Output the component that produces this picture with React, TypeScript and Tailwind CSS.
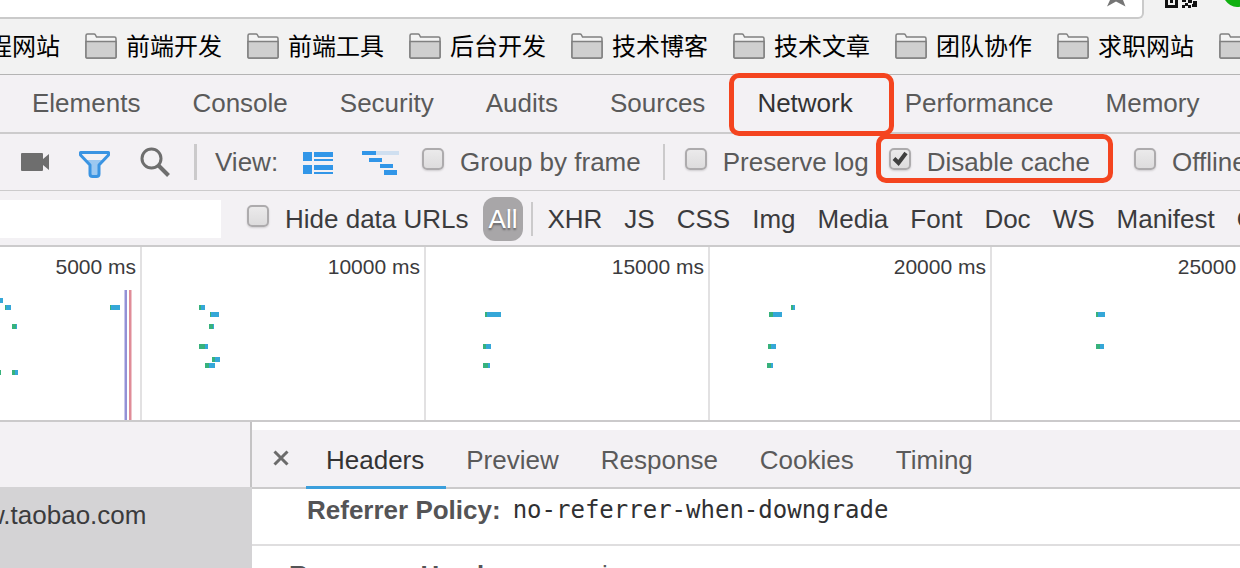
import { useState } from "react";

const bookmarks = ["前端开发", "前端工具", "后台开发", "技术博客", "技术文章", "团队协作", "求职网站"];

const panels = ["Elements", "Console", "Security", "Audits", "Sources", "Network", "Performance", "Memory"];

const resourceTypes = ["XHR", "JS", "CSS", "Img", "Media", "Font", "Doc", "WS", "Manifest", "Other"];

const timeMarks = ["5000 ms", "10000 ms", "15000 ms", "20000 ms", "25000 ms"];

const detailTabs = ["Headers", "Preview", "Response", "Cookies", "Timing"];

const GREEN = "#37b27c";
const BLUE = "#35a7d8";

// x, y, total width, width of the green (waiting) part
const requests = [
  [-3, 51, 6, 0],
  [5, 58, 6, 1],
  [12, 77, 5, 4],
  [0, 123, 1, 1],
  [12, 123, 6, 3],
  [110, 58, 10, 1],
  [199, 58, 6, 2],
  [210, 65, 9, 1],
  [209, 77, 5, 4],
  [199, 97, 9, 6],
  [212, 110, 8, 3],
  [205, 116, 10, 4],
  [485, 65, 16, 2],
  [483, 97, 8, 3],
  [483, 116, 7, 5],
  [769, 65, 13, 4],
  [791, 58, 4, 2],
  [768, 97, 8, 3],
  [767, 116, 6, 4],
  [1096, 65, 9, 2],
  [1096, 97, 8, 4],
];

function FolderIcon() {
  return (
    <svg width="32" height="26" viewBox="0 0 32 26" className="mb-0.5 shrink-0" aria-hidden="true">
      <path d="M1 24V2.500Q1 1 2.500 1H9Q10 1 10.500 2L11.500 4H29.500Q31 4 31 5.500V24Q31 25 30 25H2Q1 25 1 24Z" fill="#f4f4f4" stroke="#808080" strokeWidth="1.500" />
      <path d="M1 8.500H31V24Q31 25 30 25H2Q1 25 1 24Z" fill="#cfcfcf" stroke="#808080" strokeWidth="1.500" />
    </svg>
  );
}

function CameraIcon() {
  return (
    <svg width="28" height="18" viewBox="0 0 28 18" fill="#6e6e6e" aria-hidden="true">
      <path d="M1 0H21Q22 0 22 1V6L28 1V17L22 12V17Q22 18 21 18H1Q0 18 0 17V1Q0 0 1 0Z" />
    </svg>
  );
}

function FunnelIcon() {
  return (
    <svg width="31" height="27" viewBox="0 0 31 27" aria-hidden="true">
      <path d="M7 9H24L20 14V25H11V14Z" fill="#9cc8f0" />
      <path d="M1.500 1.500H29.500V4L20 14V23Q20 25.500 17.500 25.500H13.500Q11 25.500 11 23V14L1.500 4Z" fill="none" stroke="#3a94e2" strokeWidth="3" strokeLinejoin="round" />
    </svg>
  );
}

function SearchIcon() {
  return (
    <svg width="30" height="30" viewBox="0 0 30 30" fill="none" stroke="#6e6e6e" aria-hidden="true">
      <circle cx="11.500" cy="11.500" r="9.500" strokeWidth="3" />
      <path d="M18.500 18.500L28.500 28.500" strokeWidth="4" />
    </svg>
  );
}

function LargeRowsIcon() {
  return (
    <svg width="32" height="23" viewBox="0 0 32 23" fill="#3196e8" aria-hidden="true">
      <path d="M1 0H10V9H1ZM12 0H31V5H12ZM12 7H31V9H12ZM1 13H10V22H1ZM12 13H31V18H12ZM12 20H31V22H12Z" />
    </svg>
  );
}

function WaterfallIcon() {
  return (
    <svg width="38" height="24" viewBox="0 0 38 24" aria-hidden="true">
      <path d="M13 0H37V4H13Z" fill="#cfdff0" />
      <path d="M0 0H14V4H0ZM7 7H20V11H7ZM18 13H31V17H18ZM22 19H35V24H22Z" fill="#3196e8" />
    </svg>
  );
}

type CheckProps = {
  label: string;
  defaultChecked?: boolean;
  highlighted?: boolean;
  className?: string;
};

function Check({ label, defaultChecked, highlighted, className = "" }: CheckProps) {
  return (
    <label className={`relative flex h-full shrink-0 items-center gap-4 whitespace-nowrap ${className}`}>
      <span className="relative mb-1.5 size-[22px] shrink-0">
        <input
          type="checkbox"
          defaultChecked={defaultChecked}
          className="peer block size-[22px] appearance-none rounded-[5px] border-2 border-[#adabad] bg-linear-to-b from-[#ebeaeb] to-[#dddcdd] shadow-[0_1px_2px_rgba(0,0,0,0.15)]"
        />
        <svg width="22" height="22" viewBox="0 0 22 22" className="pointer-events-none absolute inset-0 hidden peer-checked:block" aria-hidden="true">
          <path d="M5 10.500L9.500 15L17 5" fill="none" stroke="#3f3f3f" strokeWidth="4" />
        </svg>
      </span>
      {label}
      {highlighted && (
        <span className="pointer-events-none absolute top-0 -right-[23px] bottom-[7px] -left-[13px] z-10 rounded-[10px] border-5 border-[#f4441f]" />
      )}
    </label>
  );
}

function BrowserTop() {
  return (
    <div className="flex h-[19px] shrink-0 bg-[#f2f2f2]">
      <div className="flex flex-1 justify-end rounded-br-md border-r-2 border-b-2 border-[#cacaca] bg-white pr-4">
        <svg width="20" height="7" viewBox="0 0 20 7" aria-hidden="true">
          <path d="M4 0H17L19.500 6.500L10 1.500L1 6.500Z" fill="#757575" />
        </svg>
      </div>
      <div className="flex w-24 gap-7 pl-5">
        <svg width="33" height="8" viewBox="0 0 33 8" className="shrink-0" aria-hidden="true">
          <path d="M1 0H4V5H11V0H14V8H1ZM6 0H9V3H6ZM18 0H22V2H18ZM24 0H28V3H24ZM21 3H24V6H21ZM18 5H21V8H18ZM24 5H27V8H24ZM29 1H33V4H29ZM28 4H33V7H28Z" fill="#111111" />
        </svg>
        <svg width="28" height="8" viewBox="0 0 28 8" className="shrink-0" aria-hidden="true">
          <path d="M0 0H24Q19 7 12 7Q5 7 0 0Z" fill="#10b010" />
        </svg>
      </div>
    </div>
  );
}

function BookmarksBar() {
  return (
    <nav className="flex h-14 shrink-0 items-center gap-[25px] overflow-hidden border-b border-[#b4b4b4] bg-[#f2f2f2] text-2xl whitespace-nowrap text-black">
      <a href="#" className="-ml-3 shrink-0">程网站</a>
      {bookmarks.map((name) => (
        <a key={name} href="#" className="flex shrink-0 items-center gap-[9px]">
          <FolderIcon />
          {name}
        </a>
      ))}
      <a href="#" aria-label="More bookmarks" className="shrink-0">
        <FolderIcon />
      </a>
    </nav>
  );
}

function PanelTabs() {
  const [active, setActive] = useState("Network");

  return (
    <div className="flex h-[59px] shrink-0 border-b-2 border-[#cccbcc] pl-[6px]">
      {panels.map((panel) => (
        <button
          key={panel}
          type="button"
          onClick={() => setActive(panel)}
          className={`relative shrink-0 px-[26px] pb-0.5 ${panel === active ? "text-[#333333]" : "text-[#5a5a5a]"}`}
        >
          {panel}
          {panel === "Network" && (
            <span className="pointer-events-none absolute -top-0.5 -right-[15px] -bottom-1 -left-0.5 z-10 rounded-[10px] border-5 border-[#f4441f]" />
          )}
        </button>
      ))}
    </div>
  );
}

function Toolbar() {
  return (
    <div className="flex h-[57px] shrink-0 items-center border-b border-[#cccbcc] pl-[21px] text-[#5a5a5a]">
      <button type="button" aria-label="Capture screenshots" className="mr-[30px] shrink-0">
        <CameraIcon />
      </button>
      <button type="button" aria-label="Filter" className="mr-[30px] shrink-0 pt-1">
        <FunnelIcon />
      </button>
      <button type="button" aria-label="Search" className="mr-6 shrink-0">
        <SearchIcon />
      </button>
      <span className="mr-[18px] h-9 w-[3px] shrink-0 bg-[#cbcacb]" />
      <span className="mr-6 shrink-0">View:</span>
      <button type="button" aria-label="Use large request rows" className="mr-7 shrink-0 pt-0.5">
        <LargeRowsIcon />
      </button>
      <button type="button" aria-label="Show overview" className="mr-[22px] shrink-0 pt-0.5">
        <WaterfallIcon />
      </button>
      <Check label="Group by frame" className="mr-[22px]" />
      <span className="mr-5 h-9 w-0.5 shrink-0 bg-[#cbcacb]" />
      <Check label="Preserve log" className="mr-5" />
      <Check label="Disable cache" defaultChecked highlighted className="mr-11" />
      <Check label="Offline" />
    </div>
  );
}

function FilterBar() {
  const [type, setType] = useState("All");

  return (
    <div className="flex h-14 shrink-0 items-center border-b-2 border-[#cccbcc] pt-0.5 text-[#3b3b3d]">
      <input type="text" aria-label="Filter requests" className="mr-[26px] h-[38px] w-[221px] shrink-0 bg-white px-2 outline-none" />
      <Check label="Hide data URLs" className="mr-[14px]" />
      <button
        type="button"
        onClick={() => setType("All")}
        className={`mr-2 h-11 shrink-0 rounded-xl px-[6px] ${type === "All" ? "bg-[#a8a6a8] text-white [text-shadow:0_2px_2px_rgba(0,0,0,0.4)]" : ""}`}
      >
        All
      </button>
      <span className="mr-[14px] h-[34px] w-0.5 shrink-0 bg-[#cbcacb]" />
      <div className="flex gap-[22px]">
        {resourceTypes.map((name) => (
          <button key={name} type="button" onClick={() => setType(name)} className={`shrink-0 ${type === name ? "underline" : ""}`}>
            {name}
          </button>
        ))}
      </div>
    </div>
  );
}

function Overview() {
  return (
    <div className="relative h-[175px] shrink-0 overflow-hidden border-b-2 border-[#cbcacb] bg-white">
      <div className="grid h-full grid-cols-[142px_284px_284px_282px_284px] text-[21px] leading-10 text-[#3b3b3d]">
        {timeMarks.map((mark) => (
          <div key={mark} className="border-r-2 border-[#e2e1e2] pr-1 text-right whitespace-nowrap">
            {mark}
          </div>
        ))}
      </div>
      <svg width="1240" height="173" className="absolute top-0 left-0" aria-hidden="true">
        {requests.map(([x, y, width, waiting]) => (
          <g key={`${x}-${y}`}>
            <rect x={x} y={y} width={width} height="5" fill={BLUE} />
            <rect x={x} y={y} width={waiting} height="5" fill={GREEN} />
          </g>
        ))}
        <rect x="124.500" y="43" width="2.500" height="130" fill="#9491d6" />
        <rect x="129" y="43" width="2.500" height="130" fill="#e08c98" />
      </svg>
    </div>
  );
}

function RequestDetails() {
  const [active, setActive] = useState("Headers");

  return (
    <section className="flex min-w-0 flex-1 flex-col bg-white pt-2">
      <div className="flex h-[59px] shrink-0 border-b-2 border-[#cbcacb] bg-[#f3f1f4]">
        <button type="button" aria-label="Close" className="mr-[17px] pl-[21px]">
          <svg width="16" height="16" viewBox="0 0 16 16" fill="none" stroke="#6b6b6b" strokeWidth="3" className="mb-0.5" aria-hidden="true">
            <path d="M1.500 1.500L14.500 14.500M14.500 1.500L1.500 14.500" />
          </svg>
        </button>
        {detailTabs.map((tab) => (
          <button
            key={tab}
            type="button"
            onClick={() => setActive(tab)}
            className={`-mb-0.5 shrink-0 border-b-3 pt-1 pr-[22px] pl-5 ${tab === active ? "border-[#3b9fdc] text-[#333333]" : "border-transparent text-[#5a5a5a]"}`}
          >
            {tab}
          </button>
        ))}
      </div>
      <dl className="flex h-[57px] shrink-0 gap-3 border-b-2 border-[#dfdedf] pt-[3px] pl-[55px] leading-9 whitespace-nowrap">
        <dt className="font-bold text-[#545456]">Referrer Policy:</dt>
        <dd className="font-['DejaVu_Sans_Mono',monospace] text-2xl leading-9 text-[#303032]">no-referrer-when-downgrade</dd>
      </dl>
      <div className="flex shrink-0 gap-[66px] pt-[11px] pl-[37px] leading-9 whitespace-nowrap">
        <h3 className="font-bold text-[#545456]">Response Headers</h3>
        <button type="button" className="text-[#5a5a5a]">view source</button>
      </div>
    </section>
  );
}

export default function App() {
  return (
    <main className="flex h-screen flex-col overflow-hidden bg-[#f3f1f4] font-['Liberation_Sans','Noto_Sans_CJK_SC',sans-serif] text-[26px] leading-9">
      <BrowserTop />
      <BookmarksBar />
      <PanelTabs />
      <Toolbar />
      <FilterBar />
      <Overview />
      <div className="flex min-h-0 flex-1 overflow-hidden">
        <aside className="flex w-[252px] shrink-0 flex-col overflow-hidden">
          <div className="h-[65px] shrink-0 border-r-2 border-[#c4c3c4]" />
          <a href="#" className="flex-1 bg-[#d4d3d5] pt-2.5 text-[#3b3b3d]">
            <span className="-ml-[14px]">w.taobao.com</span>
          </a>
        </aside>
        <RequestDetails />
      </div>
    </main>
  );
}
